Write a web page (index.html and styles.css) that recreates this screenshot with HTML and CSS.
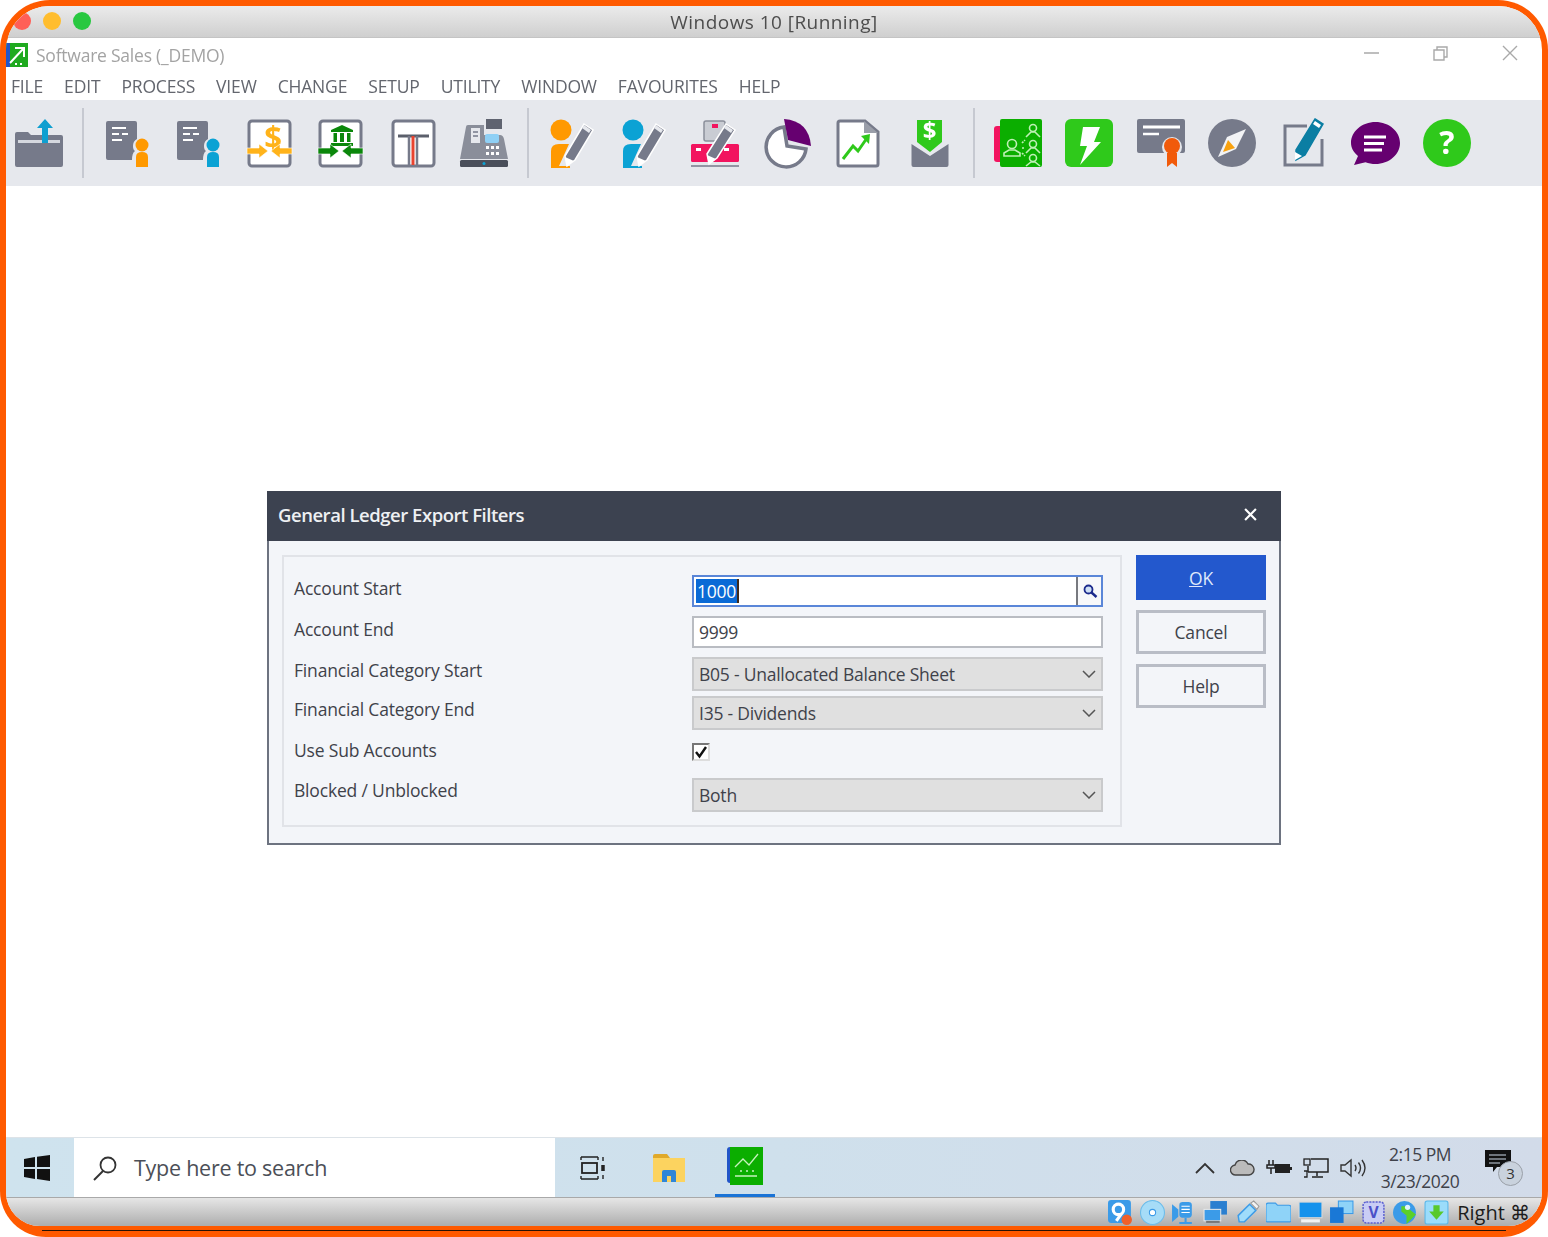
FILE: index.html
```html
<!DOCTYPE html>
<html lang="en">
<head>
<meta charset="utf-8">
<title>Windows 10 [Running]</title>
<link rel="stylesheet" href="styles.css">
</head>
<body>
<div class="frame">
  <div class="screen">
    <header class="mac-title">
      <span class="light red"></span><span class="light yellow"></span><span class="light green"></span>
      <span class="mac-text">Windows 10 [Running]</span>
    </header>
    <div class="app-title">
      <svg class="logo" viewBox="0 0 22 24"><rect width="22" height="24" fill="#1faa1f"/><rect width="4" height="24" fill="#2255c8"/><path d="M4 20 17 6M9 5h9v9" stroke="#fff" stroke-width="2" fill="none"/><path d="M9 21h2M14 21h2" stroke="#fff" stroke-width="2"/></svg>
      <span class="app-name">Software Sales (_DEMO)</span>
      <div class="win-controls">
        <svg viewBox="0 0 16 16"><path d="M0 8h15" stroke="#a9a9a9" stroke-width="1.4"/></svg>
        <svg viewBox="0 0 16 16"><path d="M1 5h10v10H1zM4 5V2h10v10h-3" fill="none" stroke="#a9a9a9" stroke-width="1.4"/></svg>
        <svg viewBox="0 0 16 16"><path d="M1 1l14 14M15 1 1 15" stroke="#a9a9a9" stroke-width="1.4"/></svg>
      </div>
    </div>
    <nav class="menu">
      <span>FILE</span><span>EDIT</span><span>PROCESS</span><span>VIEW</span><span>CHANGE</span><span>SETUP</span><span>UTILITY</span><span>WINDOW</span><span>FAVOURITES</span><span>HELP</span>
    </nav>
    <div class="toolbar">
      <div class="tools">
        <svg class="tool" viewBox="0 0 48 48"><path d="M0 15q0-2 2-2h11l3 3h30q2 0 2 2v28q0 2-2 2H2q-2 0-2-2z" fill="#767a8a"/><path d="M3 21h42v3H3z" fill="#d5d8df"/><path d="M30 0l8 9h-5v15h-6V9h-5z" fill="#0f9fd0"/></svg>
      </div>
      <span class="sep"></span>
      <div class="tools">
        <svg class="tool" viewBox="0 0 48 48"><path d="M5 2h27q2 0 2 2v16q-4 2-4 7 0 4 2 5-3 2-3 9H5q-2 0-2-2V4q0-2 2-2z" fill="#767a8a"/><path d="M9 9h14M9 15h7M19 15h6M9 21h10" stroke="#fff" stroke-width="2.2"/><circle cx="39" cy="26" r="6.500" fill="#f90"/><path d="M33 48V38q0-5 6-5t6 5v10z" fill="#f90"/></svg>
        <svg class="tool" viewBox="0 0 48 48"><path d="M5 2h27q2 0 2 2v16q-4 2-4 7 0 4 2 5-3 2-3 9H5q-2 0-2-2V4q0-2 2-2z" fill="#767a8a"/><path d="M9 9h14M9 15h7M19 15h6M9 21h10" stroke="#fff" stroke-width="2.2"/><circle cx="39" cy="26" r="6.500" fill="#0ba2d4"/><path d="M33 48V38q0-5 6-5t6 5v10z" fill="#0ba2d4"/></svg>
        <svg class="tool" viewBox="0 0 48 48"><rect x="3" y="2" width="41" height="45" rx="3" fill="#fff" stroke="#767a8a" stroke-width="3"/><text x="27" y="29" class="ic-dollar-lg ic-orange">$</text><path d="M1 29h12v-4l9 7-9 7v-4H1zM46 35H34v4l-9-7 9-7v4h12z" fill="#ffb31a" stroke="#fff" stroke-width=".6"/></svg>
        <svg class="tool" viewBox="0 0 48 48"><rect x="3" y="2" width="41" height="45" rx="3" fill="#fff" stroke="#767a8a" stroke-width="3"/><path d="M25 6l11 5v2H14v-2zM16.500 14h3.500v9h-3.500zM23 14h4v9h-4zM30 14h3.500v9H30zM14 24h22v3H14z" fill="#0a870a"/><path d="M1 29h12v-4l9 7-9 7v-4H1zM46 35H34v4l-9-7 9-7v4h12z" fill="#0a870a" stroke="#fff" stroke-width=".6"/></svg>
        <svg class="tool" viewBox="0 0 48 48"><rect x="4" y="2" width="41" height="45" rx="3" fill="#fff" stroke="#767a8a" stroke-width="3"/><path d="M9 17h31" stroke="#5b5f6b" stroke-width="3"/><path d="M20 17v29M28 17v29" stroke="#767a8a" stroke-width="2.500"/><path d="M24 17v29" stroke="#e8432f" stroke-width="3"/></svg>
        <svg class="tool" viewBox="0 0 48 48"><path d="M26 0h16v10H26z" fill="#5f6370"/><path d="M8 6h16v10h16q3 0 4 4l4 20H0l6-32q0-2 2-2z" fill="#8a8e9a"/><path d="M11 9h9v15h-9z" fill="#e6e8ed"/><path d="M13 13h5M13 17h5" stroke="#767a8a" stroke-width="1.500"/><rect x="25" y="15" width="14" height="9" rx="2" fill="#8fd0f5"/><path d="M26 27h3v3h-3zM31 27h3v3h-3zM36 27h3v3h-3zM26 33h3v3h-3zM31 33h3v3h-3zM36 33h3v3h-3z" fill="#fff"/><rect y="41" width="48" height="7" rx="1.500" fill="#4a4e5a"/><circle cx="24" cy="44.500" r="1.500" fill="#0ba2d4"/></svg>
      </div>
      <span class="sep"></span>
      <div class="tools">
        <svg class="tool" viewBox="0 0 48 48"><circle cx="13" cy="11" r="10.500" fill="#f90"/><path d="M3 49V32q0-7 8-7h10l-10 22h11v2z" fill="#f90"/><path d="M36 5l9 6-18 30-8 6-2-10z" fill="#767a8a" stroke="#fff" stroke-width="1.500"/><path d="M17 38l2 9 7-5z" fill="#fff"/><path d="M36 6l7 5-2 3-7-5z" fill="#e6e8ed"/></svg>
        <svg class="tool" viewBox="0 0 48 48"><circle cx="13" cy="11" r="10.500" fill="#0ba2d4"/><path d="M3 49V32q0-7 8-7h10l-10 22h11v2z" fill="#0ba2d4"/><path d="M36 5l9 6-18 30-8 6-2-10z" fill="#767a8a" stroke="#fff" stroke-width="1.500"/><path d="M17 38l2 9 7-5z" fill="#fff"/><path d="M36 6l7 5-2 3-7-5z" fill="#e6e8ed"/></svg>
        <svg class="tool" viewBox="0 0 48 48"><rect x="13" y="2" width="21" height="20" rx="2" fill="#c9ccd3" stroke="#8b8f9b" stroke-width="1.500"/><path d="M21 5h6v4h-6z" fill="#f2145f"/><rect y="25" width="48" height="18" rx="1.500" fill="#f2145f"/><path d="M5 29h5v3H5zM33 29h5v3h-5z" fill="#fff"/><path d="M0 47h48" stroke="#767a8a" stroke-width="1.500"/><path d="M35 5l9 6-18 28-8 6-2-10z" fill="#767a8a" stroke="#fff" stroke-width="1.500"/><path d="M16 36l2 9 7-5z" fill="#fff"/><path d="M35 6l7 5-2 3-7-5z" fill="#e6e8ed"/></svg>
        <svg class="tool" viewBox="0 0 48 48"><path d="M21 8A20 20 0 1 0 43 30L24 27z" fill="#fff" stroke="#767a8a" stroke-width="3.500"/><path d="M21 0q25 2 27 27L25 21z" fill="#660070"/></svg>
        <svg class="tool" viewBox="0 0 48 48"><path d="M6 2h25l13 11v32q0 2-2 2H6q-2 0-2-2V4q0-2 2-2z" fill="#fff" stroke="#767a8a" stroke-width="3"/><path d="M30 2v12h14z" fill="#9a9ea9"/><path d="M9 40l10-13 5 5 9-13" fill="none" stroke="#2fc91b" stroke-width="3"/><path d="M27 17l9-2-1 10z" fill="#2fc91b"/></svg>
        <svg class="tool" viewBox="0 0 48 48"><path d="M11 1h25v22l-12 10-13-10z" fill="#2fc91b"/><text x="23.500" y="20" class="ic-dollar ic-white">$</text><path d="M5.500 25l18.500 12 18.500-12v21q0 2-2 2h-33q-2 0-2-2z" fill="#767a8a"/></svg>
      </div>
      <span class="sep"></span>
      <div class="tools">
        <svg class="tool" viewBox="0 0 48 48"><rect y="7" width="10" height="36" rx="3" fill="#f2145f"/><rect x="6" width="42" height="48" rx="2" fill="#0bae00"/><g fill="none" stroke="#bff0b5" stroke-width="1.600"><circle cx="18" cy="25" r="4.500"/><path d="M10 37v-3l5-3h6l5 3v3z"/><circle cx="39" cy="9" r="3.500"/><path d="M32 18l5-5h4l5 5"/><circle cx="39" cy="25" r="3.500"/><path d="M32 34l5-5h4l5 5"/><circle cx="39" cy="39" r="3.500"/><path d="M32 47l5-4h4l5 4"/><path d="M28 24l3-3M28 29h3M28 34l3 3" stroke-dasharray="2 1"/></g></svg>
        <svg class="tool" viewBox="0 0 48 48"><rect width="48" height="48" rx="6" fill="#2fc91b"/><path d="M18 8h17l-6 15h7L15 46l7-19h-7z" fill="#fff"/></svg>
        <svg class="tool" viewBox="0 0 48 48"><rect width="48" height="34" rx="2" fill="#767a8a"/><path d="M6 8h37" stroke="#fff" stroke-width="3"/><path d="M6 15h16" stroke="#fff" stroke-width="2.500"/><circle cx="35" cy="28" r="10" fill="#e5e7ec"/><path d="M30 34h10v14l-5-4-5 4z" fill="#f15a0a"/><circle cx="35" cy="27" r="8" fill="#f15a0a"/></svg>
        <svg class="tool" viewBox="0 0 48 48"><circle cx="24" cy="24" r="24" fill="#767a8a"/><path d="M38 10 28 30 10 38 19 18z" fill="#f2f3f5"/><path d="M20 21 27 29 15 33z" fill="#f9a10d"/></svg>
        <svg class="tool" viewBox="0 0 48 48"><path d="M27 7H5v39h37V20" fill="none" stroke="#767a8a" stroke-width="3"/><path d="M35 0l8 5-18 31-9 5 0-10z" fill="#0b7ea3" stroke="#0b7ea3" stroke-width="1.500"/><path d="M35 2l6 4-2 3-6-4z" fill="#fff"/><path d="M15 33v8l7-4z" fill="#fff"/></svg>
        <svg class="tool" viewBox="0 0 48 48"><path d="M24.500 3C38 3 49 12.500 49 24S38 45 24.500 45c-3.500 0-7-.6-10-1.800L3 46l4-9C2.500 33 0 29 0 24 0 12.500 11 3 24.500 3z" fill="#660070"/><path d="M13 18h22M13 24.500h20M13 31h18" stroke="#fff" stroke-width="3"/></svg>
        <svg class="tool" viewBox="0 0 48 48"><circle cx="24" cy="24" r="24" fill="#2fc91b"/><text x="24" y="35" class="ic-help">?</text></svg>
      </div>
    </div>
    <main class="workspace">
      <section class="dialog">
        <div class="dialog-head">
          <span class="dialog-title">General Ledger Export Filters</span>
          <svg class="dialog-close" viewBox="0 0 12 12"><path d="M1 1l10 10M11 1 1 11" stroke="#fff" stroke-width="2"/></svg>
        </div>
        <div class="dialog-body">
          <div class="panel">
            <div class="row row-a"><label>Account Start</label>
              <div class="field focus"><span class="selected">1000</span><span class="caret"></span>
                <span class="lookup"><svg viewBox="0 0 16 16"><circle cx="6.500" cy="6.500" r="4" fill="#cfe0f5" stroke="#1b2a8c" stroke-width="1.800"/><path d="M9.500 9.500l5 4.500" stroke="#1b2a8c" stroke-width="2.400"/></svg></span>
              </div></div>
            <div class="row row-b"><label>Account End</label><div class="field">9999</div></div>
            <div class="row row-c"><label>Financial Category Start</label><div class="combo">B05 - Unallocated Balance Sheet<svg viewBox="0 0 14 8"><path d="M1 1l6 6 6-6" fill="none" stroke="#555" stroke-width="1.500"/></svg></div></div>
            <div class="row row-d"><label>Financial Category End</label><div class="combo">I35 - Dividends<svg viewBox="0 0 14 8"><path d="M1 1l6 6 6-6" fill="none" stroke="#555" stroke-width="1.500"/></svg></div></div>
            <div class="row row-e"><label>Use Sub Accounts</label><div class="check-wrap"><span class="check"><svg viewBox="0 0 14 14"><path d="M2 7l3.500 4.500L12 2" fill="none" stroke="#111" stroke-width="2.400"/></svg></span></div></div>
            <div class="row row-f"><label>Blocked / Unblocked</label><div class="combo">Both<svg viewBox="0 0 14 8"><path d="M1 1l6 6 6-6" fill="none" stroke="#555" stroke-width="1.500"/></svg></div></div>
          </div>
          <div class="actions">
            <button class="btn primary"><u>O</u>K</button>
            <button class="btn">Cancel</button>
            <button class="btn">Help</button>
          </div>
        </div>
      </section>
    </main>
    <footer class="taskbar">
      <svg class="start" viewBox="0 0 26 26"><path d="M0 4l11-2v10H0zM13 1.700 26 0v12H13zM0 14h11v10L0 22zM13 14h13v12l-13-2z" fill="#111"/></svg>
      <div class="search">
        <svg viewBox="0 0 26 26"><circle cx="16" cy="10" r="7.500" fill="none" stroke="#333" stroke-width="1.800"/><path d="M11 16 2 25" stroke="#333" stroke-width="2"/></svg>
        <span>Type here to search</span>
      </div>
      <svg class="taskview" viewBox="0 0 26 24"><path d="M1 1h17M1 23h17M1 1v3M18 1v3M1 20v3M18 20v3" stroke="#222" stroke-width="1.400" fill="none"/><rect x="2" y="7" width="15" height="10" fill="none" stroke="#222" stroke-width="1.800"/><path d="M23 1v4M23 19v4" stroke="#222" stroke-width="1.400"/><path d="M23 9v6" stroke="#222" stroke-width="3.500"/></svg>
      <svg class="explorer" viewBox="0 0 32 28"><path d="M0 2q0-2 2-2h12l3 4H0z" fill="#e0a92a"/><rect y="4" width="32" height="24" fill="#fcd35f"/><path d="M9 28v-10q0-2 2-2h10q2 0 2 2v10h-5v-6h-4v6z" fill="#2f86d8"/></svg>
      <div class="running">
        <svg viewBox="0 0 36 38"><rect width="6" height="36" rx="3" fill="#2255c8"/><rect x="3" width="33" height="38" fill="#0bae00"/><path d="M8 20l8-8 6 6 9-11M8 29h22" fill="none" stroke="#c6f2bd" stroke-width="1.300"/><path d="M13 24h2M19 24h2M25 24h2" stroke="#c6f2bd" stroke-width="1.300"/></svg>
      </div>
      <div class="tray">
        <svg class="t-chev" viewBox="0 0 20 12"><path d="M1 11l9-9 9 9" fill="none" stroke="#333" stroke-width="1.800"/></svg>
        <svg class="t-cloud" viewBox="0 0 25 16"><path d="M6 15a5 5 0 0 1-1-10 7 7 0 0 1 13-1 5.500 5.500 0 0 1 1 11z" fill="#bbb" stroke="#444" stroke-width="1.400"/></svg>
        <svg class="t-batt" viewBox="0 0 26 16"><path d="M3 0v5M7 0v5M1 5h8v3H1zM5 8v6" stroke="#222" stroke-width="1.500" fill="none"/><rect x="9" y="4" width="15" height="9" fill="#222"/><path d="M24 7h2v3h-2z" fill="#222"/></svg>
        <svg class="t-net" viewBox="0 0 26 20"><path d="M8 1h17v13H5M14 14v4M9 19h11M5 14V8" fill="none" stroke="#222" stroke-width="1.500"/><rect x="1" y="1" width="6" height="6" fill="none" stroke="#222" stroke-width="1.300"/><path d="M1 13h3v6H1" fill="none" stroke="#222" stroke-width="1.300"/></svg>
        <svg class="t-vol" viewBox="0 0 26 20"><path d="M1 7h4l6-5v16l-6-5H1z" fill="none" stroke="#333" stroke-width="1.400"/><path d="M15 7q2 3 0 6M18.500 4.500q4 5.500 0 11M22 2q6 8 0 16" fill="none" stroke="#333" stroke-width="1.400"/></svg>
        <div class="clock"><span>2:15 PM</span><span>3/23/2020</span></div>
        <div class="notify"><svg viewBox="0 0 26 22"><path d="M0 0h26v17H12l-4 5v-5H0z" fill="#111"/><path d="M4 5h17M4 9h17M4 13h11" stroke="#ccd8e6" stroke-width="1.200"/></svg><span class="badge">3</span></div>
      </div>
    </footer>
    <div class="vm-bar">
      <svg viewBox="0 0 24 24"><rect width="22" height="22" rx="3" fill="#3b9be8"/><circle cx="10" cy="9" r="5" fill="none" stroke="#fff" stroke-width="3"/><path d="M13 13l-5 7" stroke="#fff" stroke-width="3"/><circle cx="18" cy="19" r="5" fill="#f0602a"/></svg>
      <svg viewBox="0 0 24 24"><circle cx="12" cy="12" r="11.500" fill="#a6dcf7" stroke="#6bbcea"/><circle cx="12" cy="12" r="3" fill="#fff" stroke="#3b9be8"/></svg>
      <svg viewBox="0 0 24 24"><path d="M1 4l6 5v7l-6 5z" fill="#3b9be8"/><rect x="8" y="2" width="12" height="15" rx="3" fill="#3b9be8"/><path d="M10 6h8M10 9h8M10 12h8" stroke="#fff"/><path d="M8 22h12M14 17v5" stroke="#3b9be8" stroke-width="2"/></svg>
      <svg viewBox="0 0 24 24"><rect x="7" y="1" width="16" height="13" fill="#2a7fd0"/><rect x="1" y="9" width="16" height="11" fill="#3b9be8" stroke="#e8e8e8"/><path d="M3 21h13" stroke="#777" stroke-width="2"/></svg>
      <svg viewBox="0 0 24 24"><path d="M3 15 14 4l6 6L9 21H4z" fill="#9fdcfb" stroke="#3b9be8" stroke-width="1.400"/><path d="M15 3l3-2 5 5-2 3z" fill="#f2f2f2" stroke="#999"/></svg>
      <svg viewBox="0 0 24 24"><path d="M0 5q0-2 2-2h7l2 2h11q2 0 2 2v13q0 1-1 1H1q-1 0-1-1z" fill="#8fd3f8" stroke="#3b9be8"/></svg>
      <svg viewBox="0 0 24 24"><rect x="1" y="2" width="22" height="15" fill="#1592ec" stroke="#d8d8d8"/><path d="M3 20h18" stroke="#f2f2f2" stroke-width="3"/></svg>
      <svg viewBox="0 0 24 24"><rect x="9" y="1" width="14" height="12" fill="#8fd3f8" stroke="#3b9be8"/><rect x="1" y="7" width="13" height="15" fill="#1a78d6"/></svg>
      <svg viewBox="0 0 24 24"><rect x="2" y="2" width="20" height="20" rx="3" fill="#c9cdf5" stroke="#5a5fd0" stroke-width="1.400" stroke-dasharray="2 1"/><text x="12" y="17" class="ic-v">V</text></svg>
      <svg viewBox="0 0 24 24"><circle cx="11" cy="12" r="11" fill="#3b9be8"/><path d="M8 6h4l10 8-9 9v-8l-5-4z" fill="#5bd02a"/><circle cx="14" cy="7" r="2.500" fill="#dff3fe"/></svg>
      <svg viewBox="0 0 24 24"><rect x="1" y="1" width="22" height="22" rx="2" fill="#9bdcfb" stroke="#58b7ea"/><path d="M9 5h6v6h4l-7 8-7-8h4z" fill="#58c92b"/></svg>
      <span class="host-key">Right ⌘</span>
    </div>
  </div>
  <div class="strip"><span></span></div>
</div>
</body>
</html>
```
FILE: styles.css
```css
* { box-sizing: border-box; }
html, body { margin: 0; background: #fff; }
body { font-family: "Open Sans", "Noto Sans", sans-serif; color: #3a3d44; }
svg { display: block; flex: none; }

.frame {
  width: 1548px; height: 1237px;
  display: flex; flex-direction: column;
  padding: 6px 6px 0;
  background: #ff5a00;
  border-radius: 50px 50px 46px 46px;
  overflow: hidden;
}
.screen {
  flex: 1; min-height: 0;
  display: flex; flex-direction: column;
  background: #fff;
  border-radius: 44px 44px 34px 34px;
  overflow: hidden;
  filter: blur(0.45px);
}
.strip { height: 11px; flex: none; padding: 4px 36px 0; }
.strip span { display: block; height: 1px; background: #2a1405; }

/* mac title bar */
.mac-title {
  height: 32px; flex: none; position: relative;
  display: flex; align-items: center; gap: 12px; padding: 0 0 2px 7px;
  background: linear-gradient(#ebebeb, #cfcfcf);
  border-bottom: 1px solid #c4c4c4;
}
.light { width: 18px; height: 18px; border-radius: 50%; }
.red { background: #ff5f57; }
.yellow { background: #ffbd2e; }
.green { background: #28c840; }
.mac-text {
  position: absolute; left: 0; right: 0; top: 3px; text-align: center;
  font-size: 19px; line-height: 26px; color: #4d4d4d; letter-spacing: 0.45px;
}

/* app title */
.app-title {
  height: 34px; flex: none;
  display: flex; align-items: center; gap: 8px;
}
.logo { width: 22px; height: 24px; }
.app-name { font-size: 17.500px; letter-spacing: -0.23px; color: #a3a3a3; }
.win-controls { margin-left: auto; display: flex; gap: 53px; padding: 0 24px 4px 0; }
.win-controls svg { width: 16px; height: 16px; }

.menu {
  height: 28px; flex: none;
  display: flex; align-items: center; gap: 21px; padding: 0 0 0 5px;
  font-size: 17.500px; letter-spacing: -0.17px; color: #63666e;
}

/* toolbar */
.toolbar {
  height: 86px; flex: none;
  display: flex; align-items: center; gap: 19px; padding-left: 8.500px;
  background: #e6e8ed;
}
.tools { display: flex; gap: 23.500px; }
.tool { width: 48px; height: 48px; overflow: visible; }
.sep { width: 2px; height: 70px; background: #c6c9d1; }
.ic-dollar { font: 700 24px "Open Sans", sans-serif; text-anchor: middle; }
.ic-dollar-lg { font: 700 31px "Open Sans", sans-serif; text-anchor: middle; }
.ic-orange { fill: #ffb31a; }
.ic-white { fill: #fff; }
.ic-help { font: 700 32px "Open Sans", sans-serif; text-anchor: middle; fill: #fff; }
.ic-v { font: 700 15px "Open Sans", sans-serif; text-anchor: middle; fill: #4b50c8; }

/* workspace + dialog */
.workspace {
  flex: 1; min-height: 0;
  padding: 305px 0 0 261px;
  background: #fff;
}
.dialog {
  width: 1014px; height: 354px;
  display: flex; flex-direction: column;
  background: #f3f5f9;
  border: 2px solid #6d7380;
  border-top: 0;
}
.dialog-head {
  height: 50px; flex: none;
  margin: 0 -2px;
  display: flex; align-items: center; justify-content: space-between;
  padding: 0 24px 0 11px;
  background: #3c4250;
}
.dialog-title { font-size: 18.500px; font-weight: 600; color: #eef0f3; letter-spacing: -0.47px; margin-bottom: 4px; }
.dialog-close { width: 13px; height: 13px; margin-bottom: 4px; }
.dialog-body { display: flex; gap: 14px; padding: 14px 14px 0 13px; }
.panel {
  width: 840px; height: 272px; flex: none;
  padding: 18px 17px 0 10px;
  border: 2px solid #e1e3e8;
  display: flex; flex-direction: column;
}
.row { display: flex; align-items: center; justify-content: space-between; flex: none; }
.row label { font-size: 17.500px; letter-spacing: -0.18px; color: #3f424a; padding-bottom: 6px; }
.row-a { height: 32px; }
.row-b { height: 32px; margin-top: 9px; }
.row-c { height: 34px; margin-top: 9px; }
.row-c label { padding-bottom: 8px; }
.row-d { height: 34px; margin-top: 5px; }
.row-d label { padding-bottom: 8px; }
.row-e { height: 20px; margin-top: 12px; }
.row-e label { padding-bottom: 4px; }
.row-f { height: 34px; margin-top: 16px; }
.row-f label { padding-bottom: 10px; }

.field, .combo {
  width: 411px; height: 100%;
  display: flex; align-items: center;
  padding-left: 5px;
  font-size: 17.500px; letter-spacing: -0.23px; color: #3f424a;
}
.field { background: #fff; border: 2px solid #b9bcc2; }
.field.focus { border-color: #5a86d8; padding-left: 2px; position: relative; }
.combo { background: #e0e0e0; border: 2px solid #c9cacc; justify-content: space-between; }
.combo svg { width: 14px; height: 8px; margin-right: 5px; }
.selected { background: #0a6ad6; color: #fff; padding: 0 1px; height: 24px; line-height: 24px; }
.caret { width: 2px; height: 24px; background: #402a1a; }
.lookup {
  margin-left: auto; width: 25px; height: 100%;
  display: flex; align-items: center; justify-content: center;
  border-left: 2px solid #77797f;
  background: #f7f8fa;
}
.lookup svg { width: 16px; height: 16px; }
.check-wrap { width: 411px; }
.check { width: 18px; height: 18px; display: block; background: #fff; border: 2px solid #777; border-right-color: #ddd; border-bottom-color: #ddd; }
.check svg { width: 14px; height: 14px; }

.actions { display: flex; flex-direction: column; gap: 10px; }
.btn {
  width: 130px; height: 44px; padding: 0;
  font: 17.500px "Open Sans", sans-serif; letter-spacing: -0.2px;
  color: #3f424a;
  background: #f3f5f9;
  border: 3px solid #b9bdc6;
}
.btn.primary { height: 45px; background: #2358cd; border: 0; color: #dfe8fb; }

/* taskbar */
.taskbar {
  height: 60px; flex: none;
  display: flex; align-items: center;
  background: linear-gradient(90deg, #cfe3ee 0%, #cfe0ec 50%, #d2dbe9 100%);
  border-top: 1px solid #dde3e8;
}
.start { width: 26px; height: 26px; margin-left: 18px; }
.search {
  width: 481px; height: 100%; margin-left: 24px;
  display: flex; align-items: center; gap: 16px; padding-left: 18px;
  background: #fff;
  font-size: 21.500px; letter-spacing: -0.25px; color: #4b4f57;
}
.search svg { width: 26px; height: 26px; }
.taskview { width: 26px; height: 24px; margin-left: 25px; }
.explorer { width: 32px; height: 28px; margin-left: 47px; }
.running {
  width: 60px; height: 100%; margin-left: 30px;
  display: flex; align-items: center; justify-content: center;
  border-bottom: 3px solid #1a73d6;
}
.running svg { width: 36px; height: 38px; }
.tray { margin-left: auto; display: flex; align-items: center; padding-right: 19px; }
.t-chev { width: 20px; height: 12px; }
.t-cloud { width: 25px; height: 16px; margin-left: 15px; }
.t-batt { width: 26px; height: 16px; margin-left: 11px; }
.t-net { width: 26px; height: 20px; margin-left: 11px; }
.t-vol { width: 26px; height: 20px; margin-left: 11px; }
.clock {
  width: 108px;
  display: flex; flex-direction: column; align-items: center; gap: 4px;
  font-size: 17.500px; line-height: 23px; letter-spacing: -0.5px; color: #3f424a;
}
.notify { position: relative; width: 38px; height: 36px; margin-left: 11px; }
.notify svg { width: 26px; height: 22px; }
.badge {
  position: absolute; right: 0; bottom: 0;
  width: 25px; height: 25px; border-radius: 50%;
  display: flex; align-items: center; justify-content: center;
  font-size: 15px; color: #333;
  background: #c9d2dd; border: 1.500px solid #9aa0a8;
}

/* VirtualBox status bar */
.vm-bar {
  height: 29px; flex: none;
  display: flex; align-items: center; justify-content: flex-end; gap: 6.600px;
  padding-right: 12px;
  background: linear-gradient(#e6e6e6, #adadad);
  border-top: 1px solid #a9a9a9;
}
.vm-bar svg { width: 25px; height: 25px; }
.host-key { margin-left: 1.400px; font-size: 20px; font-weight: 500; letter-spacing: 0; color: #1c1c1c; }
```
